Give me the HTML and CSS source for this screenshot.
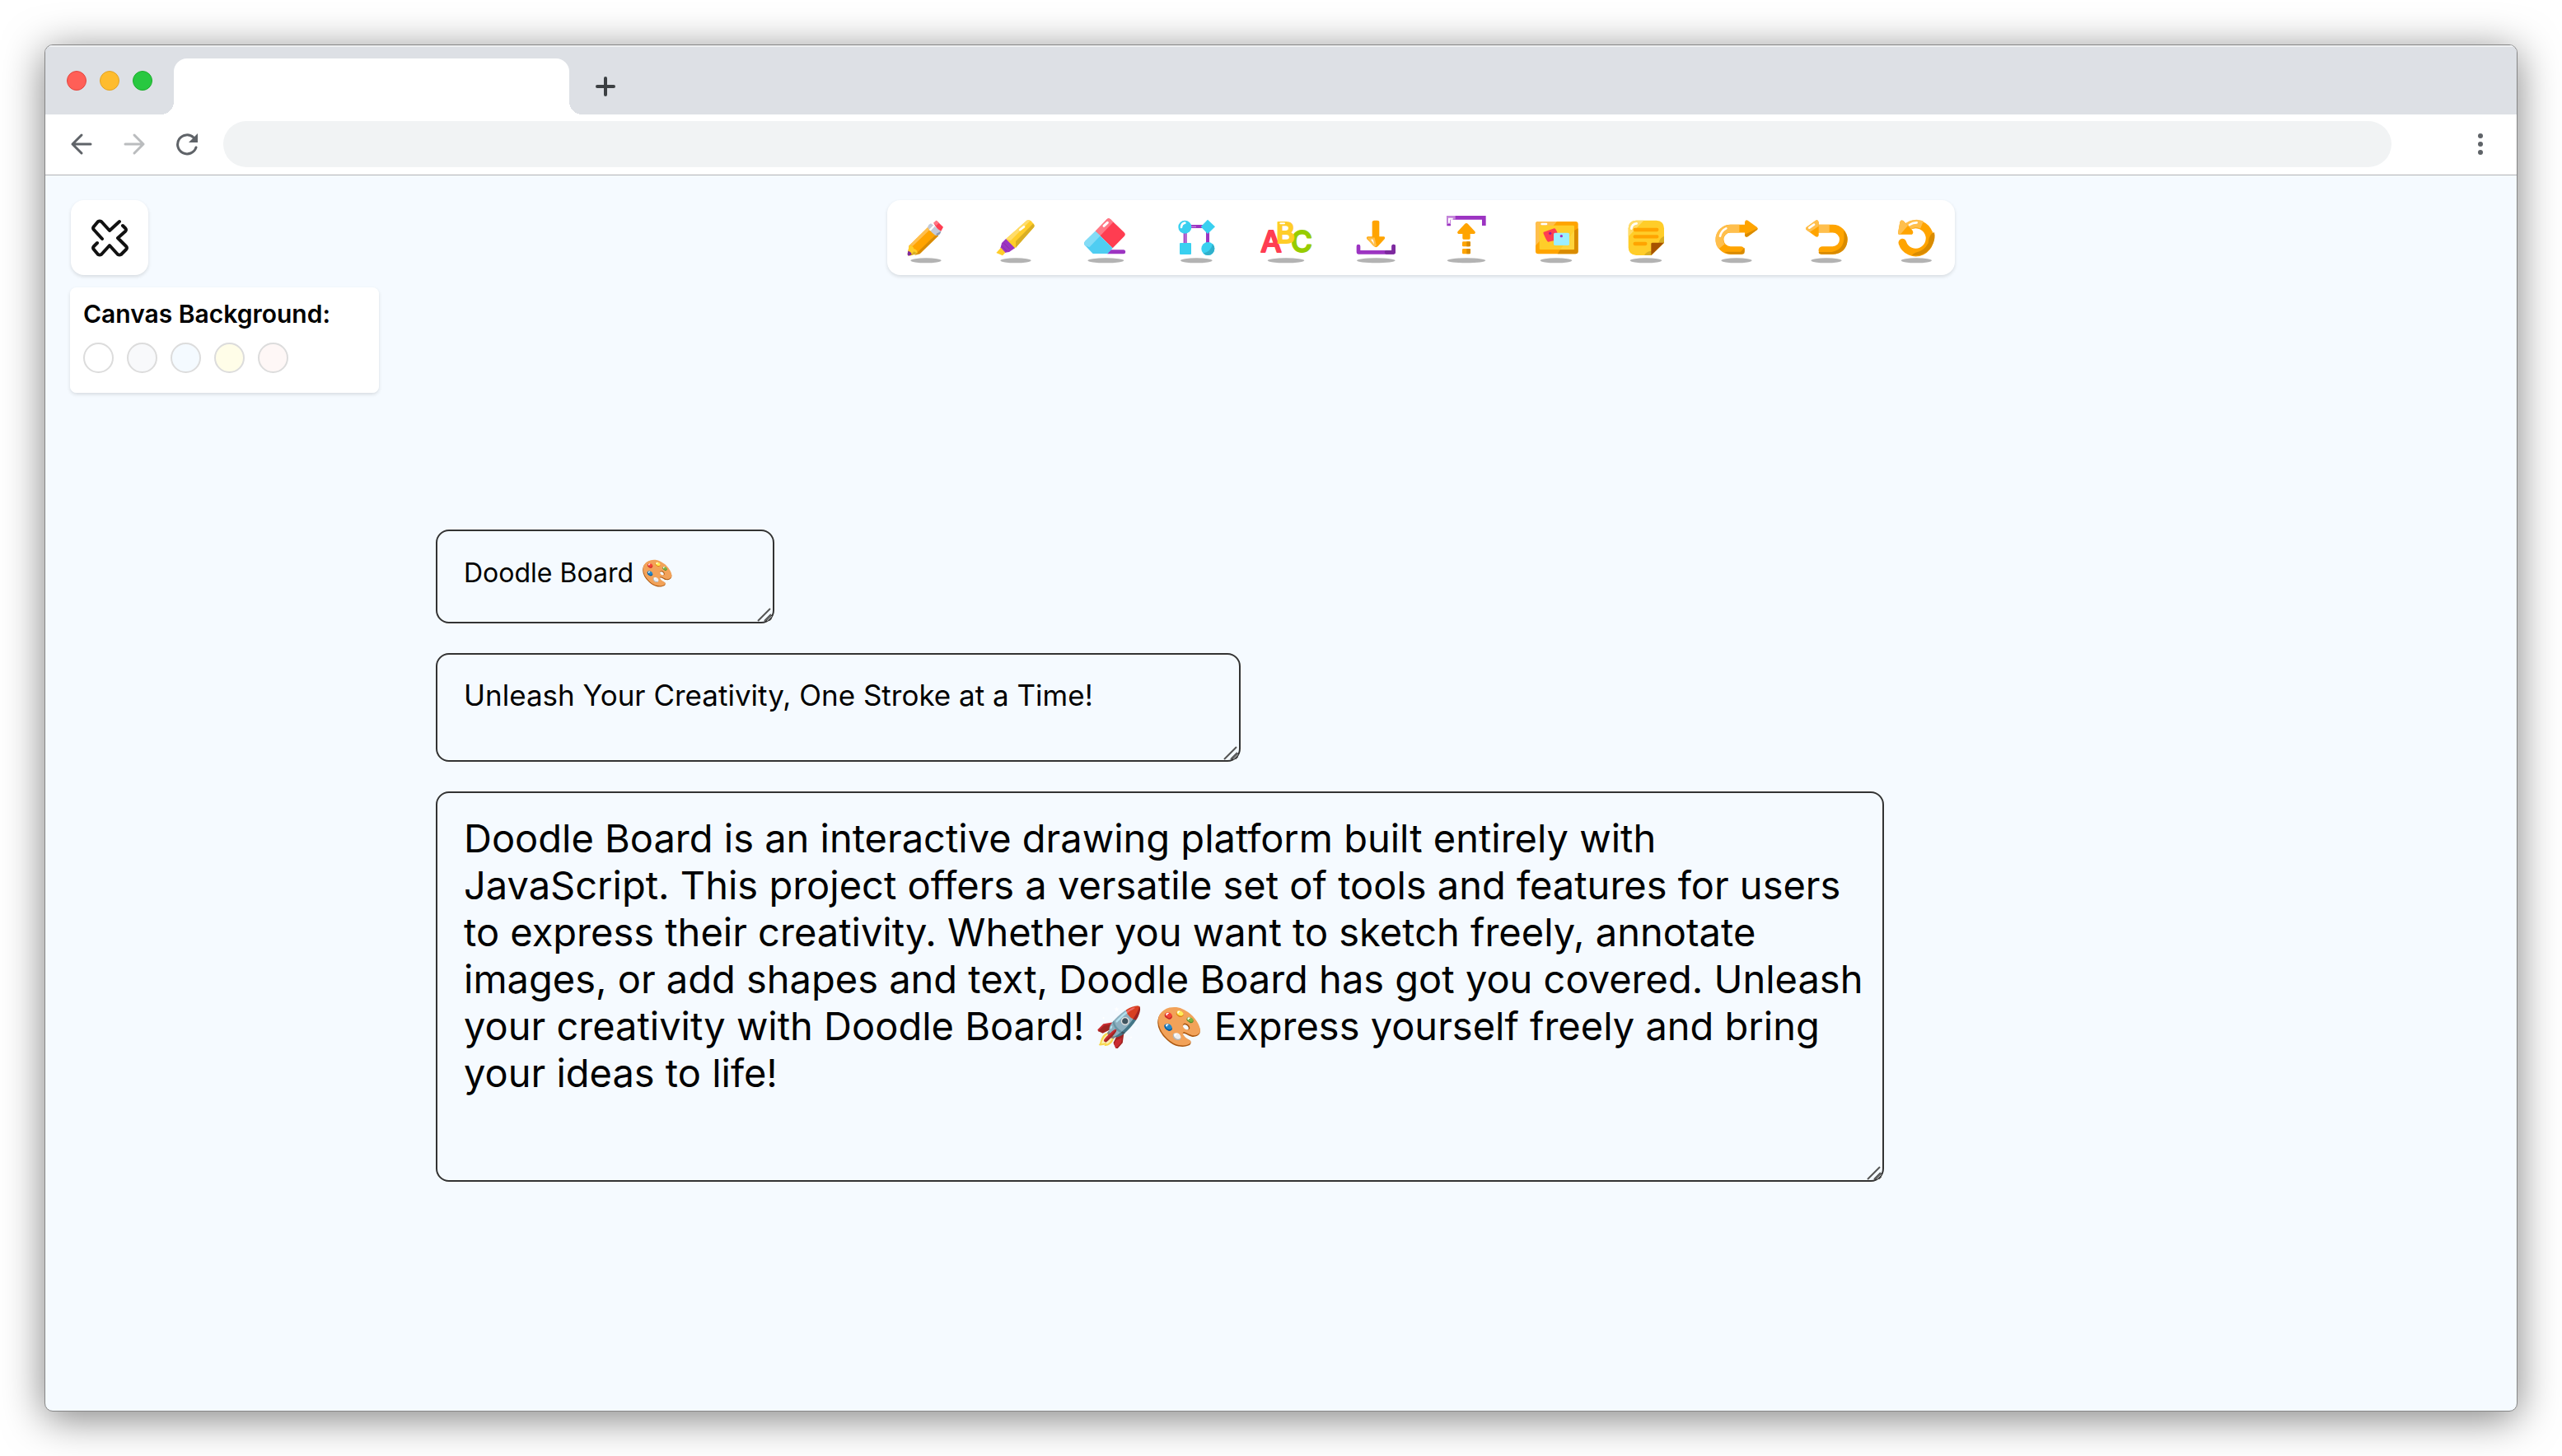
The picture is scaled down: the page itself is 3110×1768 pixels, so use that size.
FILE: index.html
```html
<!DOCTYPE html>
<html lang="en">
<head>
<meta charset="utf-8">
<title>Doodle Board</title>
<link rel="stylesheet" href="styles.css">
</head>
<body>
<div class="window">
  <header class="tabs">
    <span class="light light-red"></span>
    <span class="light light-amber"></span>
    <span class="light light-green"></span>
    <div class="tab"></div>
    <button class="chrome-btn new-tab" aria-label="New tab"><svg width="24" height="24" viewBox="0 0 24 24" fill="none" stroke="#3c4043" stroke-width="4" stroke-linecap="round"><path d="M12 2v20M2 12h20"/></svg></button>
  </header>
  <nav class="address-bar" aria-label="Browser">
    <button class="chrome-btn" aria-label="Back"><svg width="28" height="28" viewBox="0 0 28 28" fill="none" stroke="#5f6368" stroke-width="3" stroke-linecap="round" stroke-linejoin="round"><path d="M14 3L3 14l11 11M3 14h22"/></svg></button>
    <button class="chrome-btn" aria-label="Forward"><svg width="28" height="28" viewBox="0 0 28 28" fill="none" stroke="#babcbe" stroke-width="3" stroke-linecap="round" stroke-linejoin="round"><path d="M14 3l11 11-11 11M25 14H3"/></svg></button>
    <button class="chrome-btn" aria-label="Reload"><svg width="28" height="28" viewBox="0 0 28 28"><path d="M25 18A11.500 11.500 0 1 1 22 6" fill="none" stroke="#5f6368" stroke-width="3" stroke-linecap="round"/><path d="M27 1v11H16z" fill="#5f6368"/></svg></button>
    <input class="url" type="text" aria-label="Address">
    <button class="chrome-btn menu" aria-label="Menu"><svg width="8" height="28" viewBox="0 0 8 28" fill="#5f6368"><circle cx="4" cy="4" r="3"/><circle cx="4" cy="14" r="3"/><circle cx="4" cy="24" r="3"/></svg></button>
  </nav>
  <main class="board">
    <div class="top">
      <button class="close" aria-label="Close menu"><svg width="46" height="46" viewBox="0 0 46 46" fill="none" stroke="#111" stroke-width="4" stroke-linecap="round" stroke-linejoin="round"><path d="M14 24L4 13q-2-2 0-4l5-6q2-1 4 0l10 11L35 3M39 8l3 3q2 2 0 4L33 23l10 10q2 2 0 4l-6 6q-2 1-4 0L23 32 13 43q-2 1-4 0l-5-6q-2-2 0-4l4-4"/></svg></button>
      <div class="toolbar" role="toolbar" aria-label="Tools">
        <button class="tool" aria-label="Pencil"><svg viewBox="90 78 192 192"><ellipse cx="186" cy="259" rx="56" ry="9" fill="#b3b3b3"/><path d="M195 136l28 27-66 68-32 10-6-4 6-32z" fill="#ffa400"/><path d="M223 163l9 6-68 66-20 5z" fill="#d98b00"/><path d="M195 136l8 8-65 62-13-1z" fill="#ffbf4d"/><path d="M125 204q14 0 17 12 14 4 13 17l-28 9-8-5z" fill="#ffcd29"/><path d="M142 226l13 7-25 8z" fill="#d9ae23"/><path d="M121 224q13 4 13 14l-12 4q-4-3-3-8z" fill="#7d2a9e"/><path d="M204 124q-10 4-12 14 4 8 17 20t17 10q12-2 15-16z" fill="#c3cad8"/><path d="M241 152l-18 10 2 6q13-2 16-16z" fill="#8d97ab"/><path d="M214 122l10-9 25 24-8 15q-18-10-27-30z" fill="#ff3d51"/><path d="M214 122l10-9 10 9-11 10z" fill="#ff7785"/><path d="M202 147l12-13" stroke="#fff" stroke-width="7" stroke-linecap="round"/></svg></button>
        <button class="tool" aria-label="Highlighter"><svg viewBox="418 78 192 192"><ellipse cx="514" cy="259" rx="56" ry="9" fill="#b3b3b3"/><path d="M478 181l76-68q8-4 15 2l11 11q4 6 0 12l-70 77z" fill="#ffcd29"/><path d="M577 125q8 6 3 13l-66 75v-24z" fill="#d9ae23"/><path d="M478 181l76-68q8-4 13 1l-71 72z" fill="#ffdc69"/><path d="M478 180l33 34-21 14q-12 2-14 3l-18-18q2-3 5-18z" fill="#9c34c2"/><path d="M460 212l16 18-10 11-23-10z" fill="#ffcd29"/><path d="M470 195l22 22M462 205l20 20" stroke="#7d2a9e" stroke-width="2"/><path d="M530 147l14-11" stroke="#fff" stroke-width="8" stroke-linecap="round"/></svg></button>
        <button class="tool" aria-label="Eraser"><svg viewBox="746 78 192 192"><ellipse cx="843" cy="259" rx="66" ry="9" fill="#b3b3b3"/><path d="M850 227h57" stroke="#9c34c2" stroke-width="15" stroke-linecap="round"/><path d="M805 152l42-43q6-6 13 0l50 48q7 7 0 14l-42 43z" fill="#ff3d51"/><path d="M805 152l42-43q6-6 13 0l10 10-47 50z" fill="#ff7785"/><path d="M805 152l63 62-18 20h-54l-28-29q-8-8 0-17z" fill="#4fcdf2"/><path d="M805 152l18 17-40 42-15-6q-8-8 0-17z" fill="#84dcf6"/><path d="M836 133l13-12" stroke="#fff" stroke-width="9" stroke-linecap="round"/></svg></button>
        <button class="tool" aria-label="Shapes"><svg viewBox="1074 78 192 192"><ellipse cx="1171" cy="259" rx="58" ry="9" fill="#b3b3b3"/><path d="M1130 195v-60h82v70" fill="none" stroke="#9c34c2" stroke-width="12"/><path d="M1130 160v36M1150 136h20" stroke="#c485da" stroke-width="4"/><circle cx="1129" cy="137" r="24" fill="#39d0f0"/><path d="M1116 138q1-14 13-16" fill="none" stroke="#fff" stroke-width="8" stroke-linecap="round"/><path d="M1212 110l27 26-27 26-25-26z" fill="#39d0f0"/><rect x="1110" y="195" width="42" height="42" rx="3" fill="#39d0f0"/><circle cx="1213" cy="216" r="24" fill="#39d0f0"/><path d="M1230 199a24 24 0 0 1-34 34q28-6 34-34z" fill="#30b1cc"/></svg></button>
        <button class="tool" aria-label="Text"><svg viewBox="82 78 192 192"><ellipse cx="178" cy="259" rx="67" ry="9" fill="#b3b3b3"/><g class="abc"><text x="86" y="228" font-size="108" fill="#ff3d51" stroke="#ff3d51">A</text><text x="196" y="227" font-size="106" fill="#97cc00" stroke="#97cc00">C</text><text x="142" y="195" font-size="104" fill="#ffcd29" stroke="#ffcd29">B</text></g><path d="M158 124h14" stroke="#fff" stroke-width="6" stroke-linecap="round"/></svg></button>
        <button class="tool" aria-label="Download"><svg viewBox="410 78 192 192"><ellipse cx="507" cy="259" rx="70" ry="9" fill="#b3b3b3"/><path d="M443 207v22h128v-22" fill="none" stroke="#9c34c2" stroke-width="14" stroke-linecap="round" stroke-linejoin="round"/><path d="M545 229h26v-22" fill="none" stroke="#7d2a9e" stroke-width="14" stroke-linecap="round" stroke-linejoin="round"/><path d="M493 172v-54q2-5 7-5h12q7 0 7 5v54h17q6 3 2 9l-24 26q-7 7-14 0l-26-26q-4-8 4-9z" fill="#ffa400"/><path d="M481 179h18l6 24q-3 4-8-2z" fill="#fff" stroke="#ffbf4d" stroke-width="7"/></svg></button>
        <button class="tool" aria-label="Upload"><svg viewBox="739 78 192 192"><ellipse cx="835" cy="259" rx="70" ry="9" fill="#b3b3b3"/><path d="M771 126v-23h128v22" fill="none" stroke="#9c34c2" stroke-width="14" stroke-linecap="square"/><path d="M771 126v-23h24" fill="none" stroke="#c485da" stroke-width="14"/><path d="M772 122v-15h14" fill="none" stroke="#fff" stroke-width="6"/><path d="M821 178v-16h-15q-6-3-2-9l25-27q6-6 12 0l25 27q4 7-2 9h-15v16q0 4-4 4h-20q-4 0-4-4z" fill="#ffa400"/><rect x="820" y="190" width="30" height="18" rx="4" fill="#ffa400"/><rect x="820" y="216" width="30" height="19" rx="4" fill="#ffa400"/><path d="M836 190h10q4 0 4 4v10q0 4-4 4h-10zM836 216h10q4 0 4 4v11q0 4-4 4h-10z" fill="#d98b00"/></svg></button>
        <button class="tool" aria-label="Image"><svg viewBox="1067 78 192 192"><ellipse cx="1163" cy="259" rx="58" ry="9" fill="#b3b3b3"/><rect x="1088" y="117" width="155" height="118" rx="10" fill="#ffa400"/><path d="M1088 205v-78q0-10 10-10h68z" fill="#ffbf4d"/><path d="M1243 142v83q0 10-10 10h-65l10-15h50v-70z" fill="#d98b00"/><rect x="1102" y="131" width="127" height="88" rx="4" fill="#ffcd29"/><path d="M1229 150v66q0 3-4 3h-47z" fill="#ffd43c"/><path d="M1118 155l38-13q6 0 12 17l-8 26-26 6q-5-1-17-30-2-5 1-6z" fill="#ff3d51"/><rect x="1154" y="158" width="57" height="46" rx="5" fill="#9ceeff"/><circle cx="1141" cy="160" r="5" fill="#9c1a9a"/><circle cx="1182" cy="170" r="5" fill="#9c34c2"/><path d="M1111 126h16" stroke="#fff" stroke-width="8" stroke-linecap="round"/></svg></button>
        <button class="tool" aria-label="Note"><svg viewBox="75 78 192 192"><ellipse cx="171" cy="259" rx="58" ry="9" fill="#b3b3b3"/><path d="M135 113h74q28 2 28 29v53l-46 45h-56q-28-2-28-29v-69q0-27 28-29z" fill="#ffcd29"/><path d="M107 172v-30q0-27 28-29h28z" fill="#ffdc69"/><path d="M237 170v25h-20q4-18 20-25zM191 240h-26q6-14 26-16z" fill="#d9ae23"/><path d="M190 240v-42q0-4 5-4h42z" fill="#a65200"/><path d="M131 147h80M131 172h80M131 198h38" stroke="#ffa400" stroke-width="13" stroke-linecap="round"/><path d="M118 143q2-17 19-19" fill="none" stroke="#fff" stroke-width="8" stroke-linecap="round"/></svg></button>
        <button class="tool" aria-label="Redo"><svg viewBox="403 78 192 192"><ellipse cx="499" cy="259" rx="56" ry="9" fill="#b3b3b3"/><path d="M514 222h-37a38 38 0 0 1 0-79h56" fill="none" stroke="#ffa400" stroke-width="29" stroke-linecap="round"/><path d="M445 208a40 40 0 0 1 32-65h32" fill="none" stroke="#ffbf4d" stroke-width="29"/><path d="M455 228q10 8 22 8h42q9 0 9-8v-16l-14 15h-45z" fill="#d98b00"/><path d="M529 119q2-11 11-6l34 25q4 5 0 9l-34 25q-9 4-11-5z" fill="#ffa400"/><path d="M576 142q0 3-2 5l-34 25q-9 4-11-5v-3z" fill="#d98b00"/><path d="M439 170q4-19 22-28" fill="none" stroke="#fff" stroke-width="8" stroke-linecap="round"/></svg></button>
        <button class="tool" aria-label="Undo"><svg viewBox="731 78 192 192"><ellipse cx="827" cy="259" rx="56" ry="9" fill="#b3b3b3"/><path d="M813 222h37a38 38 0 0 0 0-79h-56" fill="none" stroke="#ffa400" stroke-width="29" stroke-linecap="round"/><path d="M794 143h44" stroke="#ffbf4d" stroke-width="29"/><path d="M890 150q14 14 14 32-2 50-54 54h-42q-9 0-9-8h48q54-10 43-78z" fill="#d98b00"/><path d="M799 119q-2-11-11-6l-34 25q-4 5 0 9l34 25q9 4 11-5z" fill="#ffa400"/><path d="M799 119q-2-11-11-6l-34 25q-4 5 0 9l12 9 33-22z" fill="#ffbf4d"/><path d="M765 140l17-12" stroke="#fff" stroke-width="8" stroke-linecap="round"/></svg></button>
        <button class="tool" aria-label="Reset"><svg viewBox="1059 78 192 192"><ellipse cx="1156" cy="259" rx="56" ry="9" fill="#b3b3b3"/><path d="M1105 194a51 51 0 1 0 15-54" fill="none" stroke="#ffa400" stroke-width="29" stroke-linecap="round"/><path d="M1120 140a51 51 0 0 1 56-11" fill="none" stroke="#ffbf4d" stroke-width="29"/><path d="M1140 240q52 8 76-41 10-22 5-43-20 6-22 40-16 30-46 34-10 4-13 10z" fill="#d98b00"/><path d="M1089 158l7-39q3-10 12-5l32 34q8 10 0 16h-44q-8 0-7-6z" fill="#ffa400"/><path d="M1089 158l7-39q3-10 12-5l17 18-28 32q-9 0-8-6z" fill="#ffbf4d"/><path d="M1131 129q12-8 26-8" fill="none" stroke="#fff" stroke-width="8" stroke-linecap="round"/></svg></button>
      </div>
    </div>
    <fieldset class="palette">
      <legend class="palette-title">Canvas Background:</legend>
      <div class="swatches">
        <input class="swatch swatch-white" type="radio" name="bg" aria-label="White">
        <input class="swatch swatch-gray" type="radio" name="bg" aria-label="Gray">
        <input class="swatch swatch-blue" type="radio" name="bg" aria-label="Blue">
        <input class="swatch swatch-yellow" type="radio" name="bg" aria-label="Yellow">
        <input class="swatch swatch-pink" type="radio" name="bg" aria-label="Pink">
      </div>
    </fieldset>
    <div class="notes">
      <textarea class="note note-small" aria-label="Title note" spellcheck="false">Doodle Board 🎨</textarea>
      <textarea class="note note-medium" aria-label="Tagline note" spellcheck="false">Unleash Your Creativity, One Stroke at a Time!</textarea>
      <textarea class="note note-large" aria-label="Description note" spellcheck="false">Doodle Board is an interactive drawing platform built entirely with JavaScript. This project offers a versatile set of tools and features for users to express their creativity. Whether you want to sketch freely, annotate images, or add shapes and text, Doodle Board has got you covered. Unleash your creativity with Doodle Board! 🚀 🎨 Express yourself freely and bring your ideas to life!</textarea>
    </div>
  </main>
</div>
</body>
</html>
```

FILE: styles.css
```css
* { box-sizing: border-box; }

body {
  margin: 0;
  padding: 54px;
  min-height: 100vh;
  display: flex;
  background: #fff;
  color: #000;
  font-family: Inter, "Noto Sans", sans-serif;
}

button {
  padding: 0;
  border: 0;
  background: none;
  font: inherit;
}

svg { display: block; }

.window {
  flex: 1;
  display: flex;
  flex-direction: column;
  border: 1px solid #868686;
  border-radius: 10px;
  overflow: hidden;
  background: #f5faff;
  box-shadow: 0 8px 50px rgba(0, 0, 0, 0.5);
}

.tabs {
  display: flex;
  align-items: flex-end;
  height: 84px;
  padding-left: 26px;
  background: #dde0e5;
  box-shadow: inset 0 2px #eef0f2;
}

.light {
  width: 24px;
  height: 24px;
  margin: 0 16px 29px 0;
  border-radius: 50%;
}

.light-red { background: #ff5f57; border: 1px solid #e2463f; }
.light-amber { background: #febc2e; border: 1px solid #e1a325; }
.light-green { background: #28c840; border: 1px solid #1dad2b; }

.tab {
  position: relative;
  width: 480px;
  height: 68px;
  margin-left: 10px;
  border-radius: 16px 16px 0 0;
  background: #fff;
}

.tab::before,
.tab::after {
  content: "";
  position: absolute;
  bottom: 0;
  width: 16px;
  height: 16px;
}

.tab::before {
  right: 100%;
  background: radial-gradient(circle at 0 0, transparent 16px, #fff 16px);
}

.tab::after {
  left: 100%;
  background: radial-gradient(circle at 100% 0, transparent 16px, #fff 16px);
}

.new-tab { margin: 0 0 22px 32px; }

.address-bar {
  display: flex;
  align-items: center;
  gap: 36px;
  height: 74px;
  padding: 0 40px 2px 30px;
  border-bottom: 1px solid #b1b3b5;
  background: #fff;
}

.url {
  flex: 1;
  height: 56px;
  margin: 0 68px 0 -6px;
  padding: 0 28px;
  border: 0;
  border-radius: 28px;
  background: #f1f3f4;
  font: inherit;
  font-size: 30px;
}

.board { padding: 30px; }

.top { display: flex; }

.close {
  display: grid;
  place-items: center;
  width: 94px;
  height: 91px;
  margin-left: 1px;
  border-radius: 16px;
  background: #fff;
  box-shadow: 0 2px 4px rgba(0, 0, 0, 0.12);
}

.toolbar {
  display: flex;
  align-items: center;
  justify-content: space-between;
  width: 44.1%;
  margin-left: 30.5%;
  padding: 0 15px 2px;
  border-radius: 16px;
  background: #fff;
  box-shadow: 0 2px 4px rgba(0, 0, 0, 0.12);
}

.tool {
  width: 64px;
  height: 64px;
}

.abc {
  font-family: Inter, sans-serif;
  font-weight: 500;
  stroke-width: 6px;
  stroke-linejoin: round;
}

.palette {
  width: 375px;
  height: 128px;
  margin: 15px 0 0;
  padding: 14px 16px;
  border: 0;
  border-radius: 8px;
  background: #fff;
  box-shadow: 0 2px 4px rgba(0, 0, 0, 0.12);
}

.palette-title {
  float: left;
  padding: 0;
  font-size: 30px;
  font-weight: 600;
  line-height: 36px;
}

.swatches {
  clear: both;
  display: flex;
  gap: 16px;
  padding-top: 17px;
}

.swatch {
  appearance: none;
  width: 37px;
  height: 37px;
  margin: 0;
  border: 2px solid #dcdcdc;
  border-radius: 50%;
}

.swatch-white { background: #fff; }
.swatch-gray { background: #f8f9fb; }
.swatch-blue { background: #f4faff; }
.swatch-yellow { background: #fffde8; }
.swatch-pink { background: #fef7f6; }

.notes {
  display: flex;
  flex-direction: column;
  align-items: flex-start;
  gap: 36px;
  padding: 166px 0 0 444px;
}

.note {
  margin: 0;
  padding: 28px 16px 28px 32px;
  border: 2px solid #333;
  border-radius: 16px;
  background: url("data:image/svg+xml,%3Csvg xmlns='http://www.w3.org/2000/svg' width='18' height='18' fill='none' stroke='%23555' stroke-width='2'%3E%3Cpath d='M1 17L16 2M9 17l8-8'/%3E%3C/svg%3E") no-repeat right 1px bottom 0;
  color: #000;
  font-family: inherit;
  overflow: hidden;
  resize: both;
}

.note-small { width: 411px; height: 114px; font-size: 32px; line-height: 46px; }
.note-medium { width: 977px; height: 132px; font-size: 35px; line-height: 42px; }
.note-large { width: 1758px; height: 474px; padding-top: 26px; font-size: 47px; line-height: 57px; }
```
